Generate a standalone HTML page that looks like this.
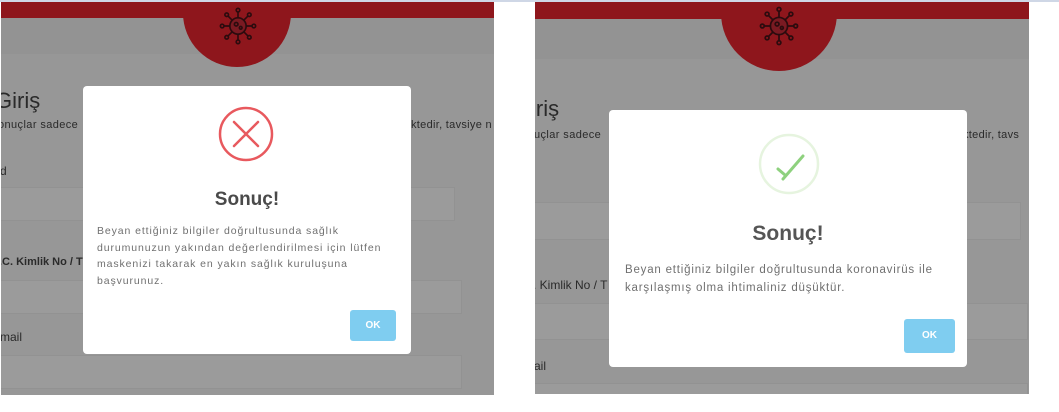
<!DOCTYPE html>
<html><head><meta charset="utf-8"><style>
*{margin:0;padding:0;box-sizing:border-box}
body{width:1059px;height:412px;background:#fff;position:relative;overflow:hidden;font-family:"Liberation Sans",sans-serif}
.top{position:absolute;left:0;top:0;width:1059px;height:2px;background:#cfd7e6}
.panel{position:absolute;background:#979797;overflow:hidden}
.red{position:absolute;left:0;top:0;right:0;background:#8e161c}
.band{position:absolute;left:0;right:0;background:#939393}
.circ{position:absolute;border-radius:50%;background:#8e161c}
.t{position:absolute;color:#2a2a2a;white-space:nowrap}
.inp{position:absolute;background:#9b9b9b;border:1px solid #929292}
.modal{position:absolute;background:#fff;border-radius:4px}
.title{position:absolute;left:0;right:0;text-align:center;color:#555;font-weight:bold}
.msg{position:absolute;color:#707070;white-space:nowrap}
.ok{position:absolute;background:#7fcdf0;border-radius:3px;color:#fff;font-weight:bold;font-size:10px;text-align:center}
</style></head><body>
<div class="top"></div>

<!-- LEFT -->
<div class="panel" style="left:1px;top:2px;width:493px;height:393px">
  <div class="band" style="top:16px;height:36px"></div>
  <div class="red" style="height:16px"></div>
  <div class="circ" style="left:182px;top:-43px;width:108px;height:108px"></div>
  <svg style="position:absolute;left:218px;top:5px" width="38" height="38" viewBox="0 0 42 42">
    <g stroke="#2b0b0e" stroke-width="1.8" fill="none">
      <circle cx="21" cy="21" r="9" fill="#7a1a22"/>
      <path d="M21 12V5M21 30v7M12 21H5M30 21h7M14.6 14.6l-5-5M27.4 27.4l5 5M27.4 14.6l5-5M14.6 27.4l-5 5"/>
      <circle cx="21" cy="3.5" r="2"/><circle cx="21" cy="38.5" r="2"/><circle cx="3.5" cy="21" r="2"/><circle cx="38.5" cy="21" r="2"/>
      <circle cx="8.5" cy="8.5" r="2"/><circle cx="33.5" cy="33.5" r="2"/><circle cx="33.5" cy="8.5" r="2"/><circle cx="8.5" cy="33.5" r="2"/>
      <circle cx="19" cy="19" r="2"/><circle cx="24" cy="23" r="1.5"/>
    </g>
  </svg>
  <div class="t" style="left:-6px;top:86px;font-size:22px">Giriş</div>
  <div class="t" style="left:-3px;top:117px;font-size:11px;letter-spacing:.4px">onuçlar sadece</div>
  <div class="t" style="left:410px;top:117px;font-size:11px;letter-spacing:.3px">ktedir, tavsiye n</div>
  <div class="t" style="left:-1px;top:162px;font-size:12px">d</div>
  <div class="inp" style="left:-2px;top:185px;width:456px;height:34px"></div>
  <div class="t" style="left:-2px;top:254px;font-size:11px;font-weight:bold">.C. Kimlik No / T</div>
  <div class="inp" style="left:-2px;top:278px;width:463px;height:34px"></div>
  <div class="t" style="left:-1px;top:328px;font-size:12px">mail</div>
  <div class="inp" style="left:-2px;top:353px;width:463px;height:34px"></div>
</div>
<div class="modal" style="left:83px;top:86px;width:328px;height:268px">
  <svg style="position:absolute;left:135px;top:20px" width="56" height="56" viewBox="0 0 56 56">
    <circle cx="28" cy="28" r="26" stroke="#e8595e" stroke-width="2.5" fill="none"/>
    <path d="M16 16L40 40M40 16L16 40" stroke="#e8595e" stroke-width="2.5" stroke-linecap="round"/>
  </svg>
  <div class="title" style="top:103px;font-size:19px;color:#4a4a4a">Sonuç!</div>
  <div class="msg" style="left:14px;top:137px;font-size:10.5px;line-height:16.7px;letter-spacing:.9px">Beyan ettiğiniz bilgiler doğrultusunda sağlık<br>durumunuzun yakından değerlendirilmesi için lütfen<br>maskenizi takarak en yakın sağlık kuruluşuna<br>başvurunuz.</div>
  <div class="ok" style="left:267px;top:224px;width:46px;height:31px;line-height:31px">OK</div>
</div>

<!-- RIGHT -->
<div class="panel" style="left:535px;top:2px;width:494px;height:392px">
  <div class="band" style="top:17px;height:40px"></div>
  <div class="red" style="height:17px"></div>
  <div class="circ" style="left:186px;top:-47px;width:116px;height:116px"></div>
  <svg style="position:absolute;left:224px;top:4px" width="40" height="40" viewBox="0 0 42 42">
    <g stroke="#2b0b0e" stroke-width="1.8" fill="none">
      <circle cx="21" cy="21" r="9" fill="#7a1a22"/>
      <path d="M21 12V5M21 30v7M12 21H5M30 21h7M14.6 14.6l-5-5M27.4 27.4l5 5M27.4 14.6l5-5M14.6 27.4l-5 5"/>
      <circle cx="21" cy="3.5" r="2"/><circle cx="21" cy="38.5" r="2"/><circle cx="3.5" cy="21" r="2"/><circle cx="38.5" cy="21" r="2"/>
      <circle cx="8.5" cy="8.5" r="2"/><circle cx="33.5" cy="33.5" r="2"/><circle cx="33.5" cy="8.5" r="2"/><circle cx="8.5" cy="33.5" r="2"/>
      <circle cx="19" cy="19" r="2"/><circle cx="24" cy="23" r="1.5"/>
    </g>
  </svg>
  <div class="t" style="left:-4px;top:94px;font-size:22px">iriş</div>
  <div class="t" style="left:-1px;top:127px;font-size:11px;letter-spacing:.4px">uçlar sadece</div>
  <div class="t" style="left:428px;top:127px;font-size:11px;letter-spacing:.3px">ktedir, tavs</div>
  <div class="inp" style="left:-2px;top:200px;width:488px;height:38px"></div>
  <div class="t" style="left:-2px;top:276px;font-size:12px">. Kimlik No / T</div>
  <div class="inp" style="left:-2px;top:301px;width:495px;height:37px"></div>
  <div class="t" style="left:-1px;top:357px;font-size:12px">ail</div>
  <div class="inp" style="left:-2px;top:381px;width:495px;height:20px"></div>
</div>
<div class="modal" style="left:609px;top:110px;width:358px;height:257px">
  <svg style="position:absolute;left:149px;top:23px" width="62" height="62" viewBox="0 0 62 62">
    <circle cx="31" cy="31" r="29" stroke="#e6f4df" stroke-width="2.5" fill="none"/>
    <path d="M20 36L27 42M25 46L45 23" stroke="#8ed17e" stroke-width="3" stroke-linecap="round"/>
  </svg>
  <div class="title" style="top:112px;font-size:21px">Sonuç!</div>
  <div class="msg" style="left:16px;top:151px;font-size:11.5px;line-height:18px;letter-spacing:.8px">Beyan ettiğiniz bilgiler doğrultusunda koronavirüs ile<br>karşılaşmış olma ihtimaliniz düşüktür.</div>
  <div class="ok" style="left:295px;top:209px;width:51px;height:34px;line-height:34px">OK</div>
</div>
</body></html>
